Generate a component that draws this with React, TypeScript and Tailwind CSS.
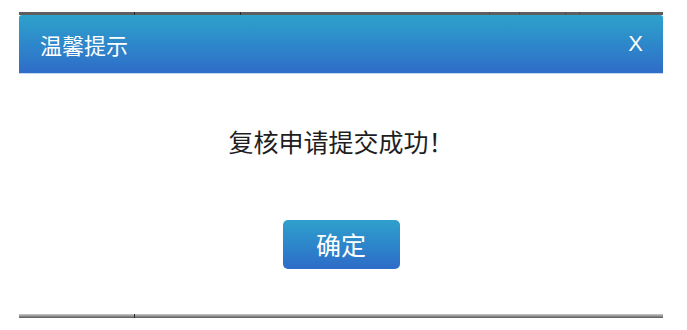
import React from 'react';

const cjk = { fontFamily: '"Noto Sans CJK SC", "Noto Sans", sans-serif' };

const Ticks = ({ xs, color }: { xs: number[]; color: string }) => (
    <>
        {xs.map((x) => (
            <span
                key={x}
                className="absolute top-0 h-full w-px"
                style={{ left: x, backgroundColor: color }}
            />
        ))}
    </>
);

export default function App() {
    return (
        <div className="w-[687px] h-[330px] bg-white pt-[12px] px-[19px]" style={cjk}>
            <div className="w-[644px] flex flex-col">
                {/* page content peeking out above the dialog */}
                <div className="relative h-[3px] bg-[#5e5e5e]">
                    <Ticks xs={[115, 221]} color="#2a2a2a" />
                    <Ticks xs={[470, 500, 546, 560]} color="#7a3a3a" />
                </div>

                <div className="flex flex-col bg-white rounded-[3px] overflow-hidden h-[299px]">
                    <div className="h-[59px] flex items-center justify-between pl-[21px] pr-[20px] bg-gradient-to-b from-[#2ea2cb] to-[#2f6cc8] border-b border-[#c4daf2]">
                        <span className="text-[22px] leading-none text-white">温馨提示</span>
                        <span
                            className="text-[22px] leading-none text-white"
                            style={{ fontFamily: '"Liberation Sans", Arial, sans-serif' }}
                        >
                            X
                        </span>
                    </div>

                    <div className="flex-1 flex flex-col items-center pt-[52px]">
                        <p className="text-[25px] leading-[30px] text-[#1e1e1e]">复核申请提交成功！</p>
                        <button className="mt-[64px] w-[117px] h-[49px] rounded-[5px] bg-gradient-to-b from-[#2fa0cc] to-[#2d6bc8] text-white text-[25px] leading-none">
                            确定
                        </button>
                    </div>
                </div>

                <div className="relative h-[4px] bg-gradient-to-b from-[#cfcfcf] to-[#5a5a5a]">
                    <Ticks xs={[115]} color="#2a2a2a" />
                </div>
            </div>
        </div>
    );
}
